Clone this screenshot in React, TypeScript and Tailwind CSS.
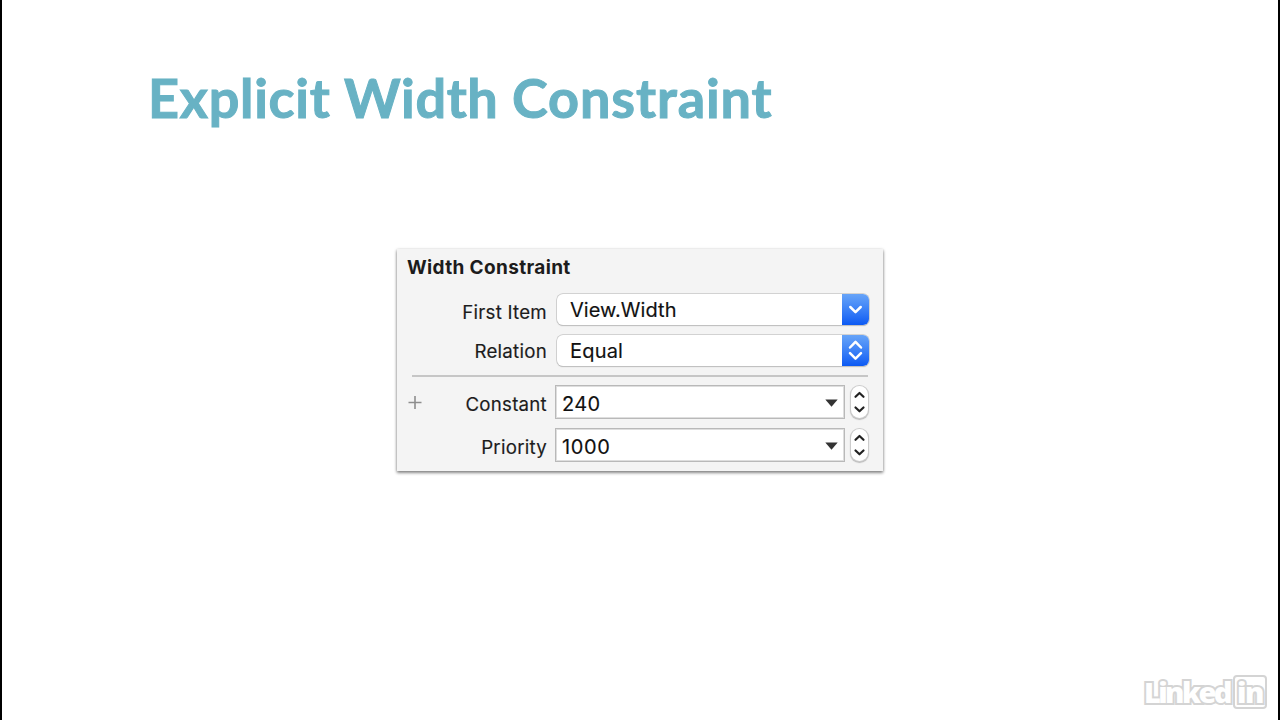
import type { ReactNode } from "react";

function Label({ children, className }: { children: ReactNode; className: string }) {
  return <div className={`w-[123px] shrink-0 pt-0.5 text-right text-[18.7px] text-[#1c1c1c] [-webkit-text-stroke:0.15px_#1c1c1c] ${className}`}>{children}</div>;
}

function Popup({ value, both, className }: { value: string; both?: boolean; className: string }) {
  return (
    <div className="flex h-[31px] w-[312px] overflow-hidden rounded-[6px] bg-white shadow-[0_0_0_0.75px_#c6c6c6,0_1px_1px_#aaa]">
      <div className={`flex-1 pl-[13px] text-[20px] text-[#111] [-webkit-text-stroke:0.15px_#111] ${className}`}>{value}</div>
      <div className="h-[31px] w-[27px] bg-linear-to-b from-[#67a4f8] to-[#0b59f3]">
        <svg width="27" height="31" viewBox="0 0 27 31" fill="none" stroke="white" strokeWidth="2.5" strokeLinecap="round" strokeLinejoin="round">
          {both ? <path d="M8 12.5l5.5-5.7L19 12.5M8 18.2l5.5 5.5 5.5-5.5" /> : <path d="M8.3 13l5.2 5.2 5.2-5.2" />}
        </svg>
      </div>
    </div>
  );
}

function Field({ value, className }: { value: string; className: string }) {
  return (
    <>
      <div className="flex h-[34px] w-[290px] shrink-0 items-center justify-between border-[1.5px] border-[#b9b9b9] bg-white pr-1.5 pl-[6px] shadow-[inset_0_0_0_1px_#dedede]">
        <span className={`pt-[5px] text-[20px] leading-[29px] text-[#111] [-webkit-text-stroke:0.15px_#111] ${className}`}>{value}</span>
        <svg className="mt-0.5" width="13" height="8" viewBox="0 0 13 8"><path d="M0.3 0.5h12.4L6.5 7.8z" fill="#333" /></svg>
      </div>
      <div className="mt-px ml-[6px] h-[32px] w-[17px] rounded-full bg-white shadow-[0_0_0_1px_#ccc,0_1px_1px_1px_#bbb]">
        <svg width="17" height="32" viewBox="0 0 17 32" fill="none" stroke="#222" strokeWidth="2.2" strokeLinecap="round" strokeLinejoin="round">
          <path d="M4.5 10.8l4-3.8 4 3.8M4.5 21.5l4 3.8 4-3.8" />
        </svg>
      </div>
    </>
  );
}

export default function App() {
  return (
    <main className="relative flex h-[720px] w-[1280px] flex-col overflow-hidden border-x-2 border-black bg-white font-['Inter',sans-serif]">
      <h1 className="flex h-[249px] gap-[15px] pt-[65px] pl-[146px] font-['Lato',sans-serif] text-[54px] leading-[66px] font-bold whitespace-nowrap text-[#68b2c4] [-webkit-text-stroke:1px_#68b2c4]">
        <span className="w-[181px] tracking-[0.7px]">Explicit</span>
        <span className="w-[153px] tracking-[0.6px]">Width</span>
        <span className="tracking-[0.9px]">Constraint</span>
      </h1>
      <section className="ml-[395px] h-[222px] w-[486px] bg-[#f4f4f4] shadow-[0_1px_3px_rgba(0,0,0,0.35),0_2px_3px_rgba(0,0,0,0.3)]">
        <h2 className="h-[45px] pt-[5px] pl-[10px] text-[19px] leading-7 font-bold tracking-[0.35px] text-[#1c1c1c]">Width Constraint</h2>
        <div className="flex h-[41px] pl-[27px]">
          <Label className="leading-[34px] tracking-[0.25px]">First Item</Label>
          <div className="w-[10px]" />
          <Popup value="View.Width" className="leading-[32px] tracking-[0.05px]" />
        </div>
        <div className="flex h-[40px] pl-[27px]">
          <Label className="leading-[30px] tracking-[0.25px]">Relation</Label>
          <div className="w-[10px]" />
          <Popup value="Equal" both className="leading-[32px] tracking-[0.2px]" />
        </div>
        <div className="ml-[15px] h-0.5 w-[456px] bg-[#c6c6c6]" />
        <div className="flex h-[43px] pt-[8px] pl-[11px]">
          <svg className="mt-[10px] shrink-0" width="16" height="15" viewBox="0 0 16 15" stroke="#8e8e8e" strokeWidth="1.6"><path d="M0.5 7.5h13M7 1v13" /></svg>
          <Label className="leading-[36px] tracking-[0.25px]">Constant</Label>
          <div className="w-2 shrink-0" />
          <Field value="240" className="tracking-[0.3px]" />
        </div>
        <div className="flex h-[43px] pt-[8px] pl-[27px]">
          <Label className="leading-[36px] tracking-[0.25px]">Priority</Label>
          <div className="w-2 shrink-0" />
          <Field value="1000" className="tracking-[0.6px]" />
        </div>
      </section>
      <div className="absolute top-[675px] left-[1142px] flex font-['Open_Sans',sans-serif] text-[29px] leading-[33px] font-extrabold text-white">
        <span className="w-[89px] tracking-[-2.6px] [paint-order:stroke_fill] [-webkit-text-stroke:4px_#d4d4d4]">Linked</span>
        <div className="h-[34px] w-[34px] rounded-[4px] border-[2.5px] border-[#d4d4d4] pl-[2px] leading-[29px] tracking-[-1.5px] [paint-order:stroke_fill] [-webkit-text-stroke:4px_#d4d4d4]">in</div>
      </div>
    </main>
  );
}
